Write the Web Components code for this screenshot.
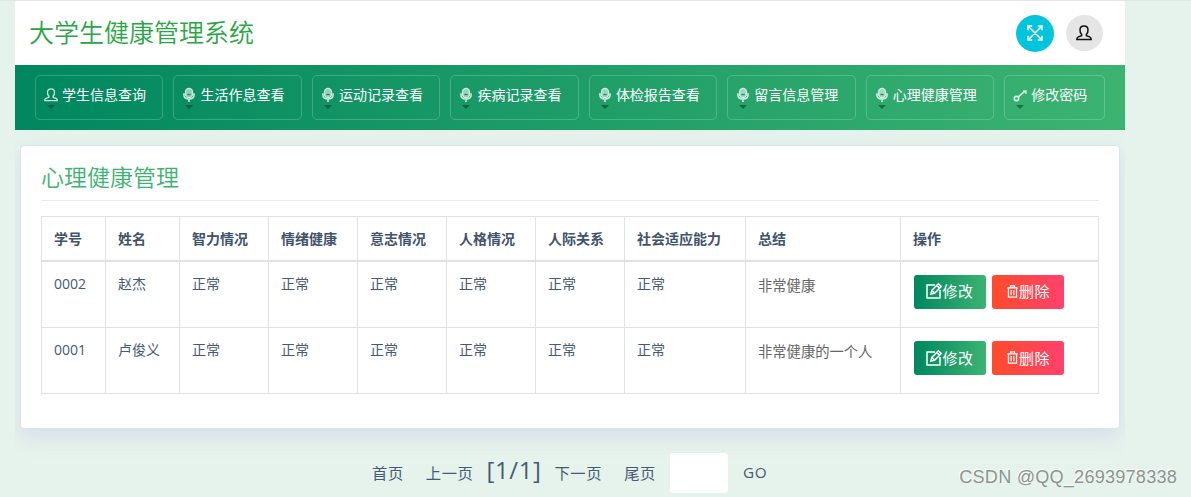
<!DOCTYPE html>
<html lang="zh-CN">
<head>
<meta charset="utf-8">
<title>大学生健康管理系统</title>
<style>
html, body {
    height: 100%;
}

body {
    margin: 0;
    overflow: hidden;
    box-sizing: border-box;
    border-top: 1px solid #e2e6ea;
    background: #e6f3ec;
    color: #455a75;
    font-family: "Open Sans", "Noto Sans CJK SC", sans-serif;
    font-size: 14px;
}
</style>
</head>
<body>
<health-app></health-app>
<water-mark>CSDN @QQ_2693978338</water-mark>

<script>
const ICONS = {
  user: `<path d="M5.600 9.300C4.300 8.200 3.900 6.600 4 4.700 4.100 2.200 5.600 1 8 1s3.900 1.200 4 3.700c.1 1.900-.3 3.500-1.600 4.600v1.400l3.300 1.200c1 .4 1.500 1.300 1.500 2.600H.8c0-1.300.5-2.200 1.500-2.600l3.300-1.200z"/>`,
  mic: `<rect x="4" y=".5" width="8" height="10.500" rx="4" fill="currentColor" fill-opacity=".7"/><path d="M2.200 6v2c0 2.900 2.500 4.500 5.800 4.500s5.800-1.600 5.800-4.500V6M8 12.500V16" stroke-width="1.800"/><path d="M6 7.500h4" stroke="#178f63"/>`,
  key: `<circle cx="4" cy="12" r="2.500" stroke-width="1.900"/><path d="M5.900 10.100 14.500 3M11.500 3.500h3.200v3" stroke-width="1.900"/>`,
  fullscreen: `<path d="M2 2l12 12M14 2 2 14M1 5.200V1h4.200M10.800 1H15v4.200M15 10.800V15h-4.200M5.200 15H1v-4.200"/>`,
  edit: `<path d="M9 2H1v13h13V7"/><path d="M5 11l.8-3.600L12.400.8l2.800 2.800-6.600 6.600zM10.800 2.400l2.800 2.800M5.800 7.400l2.800 2.800"/>`,
  trash: `<path d="M1.500 3.500h13M5.500 3.200V1h5v2.200M3 3.500V15h10V3.500M6.300 6v6.500M9.700 6v6.500"/>`,
};

class TiIcon extends HTMLElement {
  connectedCallback() {
    this.attachShadow({ mode: "open" }).innerHTML = `
<style>
:host { display: inline-block; width: 16px; height: 16px; flex: none; }
svg { display: block; width: 100%; height: 100%; overflow: visible; }
</style>
<svg viewBox="0 0 16 16" fill="none" stroke="currentColor" stroke-width="1.500">${ICONS[this.getAttribute("name")]}</svg>`;
  }
}

class TopBar extends HTMLElement {
  connectedCallback() {
    this.attachShadow({ mode: "open" }).innerHTML = `
<style>
:host {
    display: flex;
    align-items: center;
    height: 64px;
    padding: 0 22px 0 14px;
    background: #fff;
}
h1 {
    flex: 1;
    margin: 0;
    padding-bottom: 2px;
    color: #28a745;
    font-size: 25px;
    font-weight: 350;
    line-height: 36px;
}
.round {
    display: flex;
    align-items: center;
    justify-content: center;
    width: 37px;
    height: 36px;
    margin-left: 12px;
    border-radius: 50%;
    background: #e5e5e5;
    color: #111;
}
.round.cyan {
    width: 38px;
    height: 37px;
    background: #00c5dc;
    color: #fff;
}
.round:not(.cyan) ti-icon { margin-right: 1px; }
</style>
<h1><slot></slot></h1>
<div class="round cyan"><ti-icon name="fullscreen"></ti-icon></div>
<div class="round"><ti-icon name="user"></ti-icon></div>`;
  }
}

class NavItem extends HTMLElement {
  connectedCallback() {
    this.attachShadow({ mode: "open" }).innerHTML = `
<style>
:host {
    display: block;
    box-sizing: border-box;
    height: 45px;
    padding: 9px 16.480px 0 8px;
    border: 1px solid rgba(255, 255, 255, .2);
    border-radius: 5px;
    color: #fff;
    white-space: nowrap;
}
.label {
    display: flex;
    align-items: center;
    gap: 4px;
    line-height: 20px;
}
ti-icon { width: 14px; height: 14px; opacity: .8; }
.caret {
    width: 0;
    margin: 0 0 0 3px;
    border: 4px solid transparent;
    border-top-color: rgba(0, 50, 30, .5);
    border-bottom: 0;
}
</style>
<div class="label"><ti-icon name="${this.getAttribute("icon")}"></ti-icon><span><slot></slot></span></div>
<div class="caret"></div>`;
  }
}

class NavBar extends HTMLElement {
  connectedCallback() {
    this.attachShadow({ mode: "open" }).innerHTML = `
<style>
:host {
    display: flex;
    gap: 10px;
    box-sizing: border-box;
    height: 65px;
    padding: 10px 20px;
    background: linear-gradient(90deg, #00875f, #3cb371);
}
</style>
<slot></slot>`;
  }
}

class PageCard extends HTMLElement {
  connectedCallback() {
    this.attachShadow({ mode: "open" }).innerHTML = `
<style>
:host {
    display: block;
    box-sizing: border-box;
    height: 284px;
    margin: 15px 5px 0;
    padding: 14px 20px 0;
    border: 1px solid #dde3ee;
    border-radius: 4px;
    background: #fff;
    box-shadow: 0 8px 20px rgba(208, 212, 232, .7);
}
h2 {
    margin: 0 0 15px;
    padding-bottom: 6px;
    border-bottom: 1px solid #ebebed;
    color: #3cb371;
    font-size: 23px;
    font-weight: 350;
    line-height: 34px;
}
</style>
<h2>${this.getAttribute("heading")}</h2>
<slot></slot>`;
  }
}

class ActionButton extends HTMLElement {
  connectedCallback() {
    this.attachShadow({ mode: "open" }).innerHTML = `
<style>
:host {
    display: flex;
    align-items: center;
    justify-content: center;
    width: 72px;
    height: 34px;
    border-radius: 3px;
    background: linear-gradient(90deg, #00875f, #3cb371);
    color: #fff;
    font-size: 15px;
    letter-spacing: .5px;
    white-space: nowrap;
}
:host([kind="danger"]) { background: linear-gradient(90deg, #ff4b2b, #ff416c); }
:host([kind="danger"]) ti-icon { width: 13px; height: 15px; }
ti-icon { margin-bottom: 1px; }
</style>
<ti-icon name="${this.getAttribute("icon")}"></ti-icon><slot></slot>`;
  }
}

const COLUMNS = [
  ["学号", 64],
  ["姓名", 74],
  ["智力情况", 89],
  ["情绪健康", 89],
  ["意志情况", 89],
  ["人格情况", 89],
  ["人际关系", 89],
  ["社会适应能力", 121],
  ["总结", 155],
  ["操作", 198],
];

const RECORDS = [
  ["0002", "赵杰", "正常", "正常", "正常", "正常", "正常", "正常", "非常健康"],
  ["0001", "卢俊义", "正常", "正常", "正常", "正常", "正常", "正常", "非常健康的一个人"],
];

class RecordTable extends HTMLElement {
  connectedCallback() {
    const cols = COLUMNS.map(([, width]) => `<col style="width: ${width}px">`).join("");
    const head = COLUMNS.map(([name]) => `<th>${name}</th>`).join("");
    const rows = RECORDS.map((record) => `
<tr>${record.map((value) => `<td>${value}</td>`).join("")}<td><div class="actions">
  <action-button icon="edit">修改</action-button>
  <action-button icon="trash" kind="danger">删除</action-button>
</div></td></tr>`).join("");

    this.attachShadow({ mode: "open" }).innerHTML = `
<style>
:host { display: block; }
table {
    width: 1057px;
    table-layout: fixed;
    border-collapse: collapse;
    font-size: 14px;
    line-height: 21px;
}
th, td {
    box-sizing: border-box;
    padding: 0 12px;
    border: 1px solid #dee2e6;
    text-align: left;
    white-space: nowrap;
}
th {
    height: 44px;
    padding-top: 1px;
    border-bottom-width: 2px;
    color: #40536c;
    font-weight: 700;
}
td {
    height: 66px;
    padding-top: 11px;
    vertical-align: top;
}
tr:first-child td { height: 67px; }
td:nth-child(9) {
    padding-top: 13px;
    color: #666;
    font-size: 14.300px;
}
td:last-child { padding-top: 13px; }
.actions { display: flex; gap: 6px; margin-left: 1px; }
</style>
<table>
  <colgroup>${cols}</colgroup>
  <thead><tr>${head}</tr></thead>
  <tbody>${rows}</tbody>
</table>`;
  }
}

class PageTurner extends HTMLElement {
  connectedCallback() {
    this.attachShadow({ mode: "open" }).innerHTML = `
<style>
:host {
    display: flex;
    align-items: center;
    height: 40px;
    margin: 24px 0 0 357px;
    font-size: 15.300px;
    letter-spacing: .6px;
    white-space: nowrap;
}
span { padding-bottom: 3px; }
.prev { margin: 0 13px 0 22px; }
.count { margin: -4px 13px 0 0; font-size: 24px; }
.last { margin: 0 14px 0 22px; }
input {
    box-sizing: border-box;
    width: 58px;
    height: 40px;
    margin: 0 15px 0 0;
    padding: 0 8px;
    border: 0;
    border-radius: 3px;
    background: #fff;
}
</style>
<span>首页</span>
<span class="prev">上一页</span>
<span class="count">[1/1]</span>
<span>下一页</span>
<span class="last">尾页</span>
<input type="text">
<span>GO</span>`;
  }
}

class WaterMark extends HTMLElement {
  connectedCallback() {
    this.attachShadow({ mode: "open" }).innerHTML = `
<style>
:host {
    position: absolute;
    right: 14px;
    bottom: 9px;
    color: #8b9490;
    font: 18px/22px "Liberation Sans", sans-serif;
    letter-spacing: .28px;
    text-shadow: -1px -1px 0 #fff;
    white-space: nowrap;
}
</style>
<slot></slot>`;
  }
}

class HealthApp extends HTMLElement {
  connectedCallback() {
    this.attachShadow({ mode: "open" }).innerHTML = `
<style>
:host {
    display: block;
    width: 1110px;
    height: 496px;
    margin-left: 15px;
    overflow: hidden;
}
</style>
<top-bar>大学生健康管理系统</top-bar>
<nav-bar>
  <nav-item icon="user">学生信息查询</nav-item>
  <nav-item icon="mic">生活作息查看</nav-item>
  <nav-item icon="mic">运动记录查看</nav-item>
  <nav-item icon="mic">疾病记录查看</nav-item>
  <nav-item icon="mic">体检报告查看</nav-item>
  <nav-item icon="mic">留言信息管理</nav-item>
  <nav-item icon="mic">心理健康管理</nav-item>
  <nav-item icon="key">修改密码</nav-item>
</nav-bar>
<page-card heading="心理健康管理">
  <record-table></record-table>
</page-card>
<page-turner></page-turner>`;
  }
}

customElements.define("ti-icon", TiIcon);
customElements.define("top-bar", TopBar);
customElements.define("nav-item", NavItem);
customElements.define("nav-bar", NavBar);
customElements.define("page-card", PageCard);
customElements.define("action-button", ActionButton);
customElements.define("record-table", RecordTable);
customElements.define("page-turner", PageTurner);
customElements.define("water-mark", WaterMark);
customElements.define("health-app", HealthApp);
</script>
</body>
</html>
